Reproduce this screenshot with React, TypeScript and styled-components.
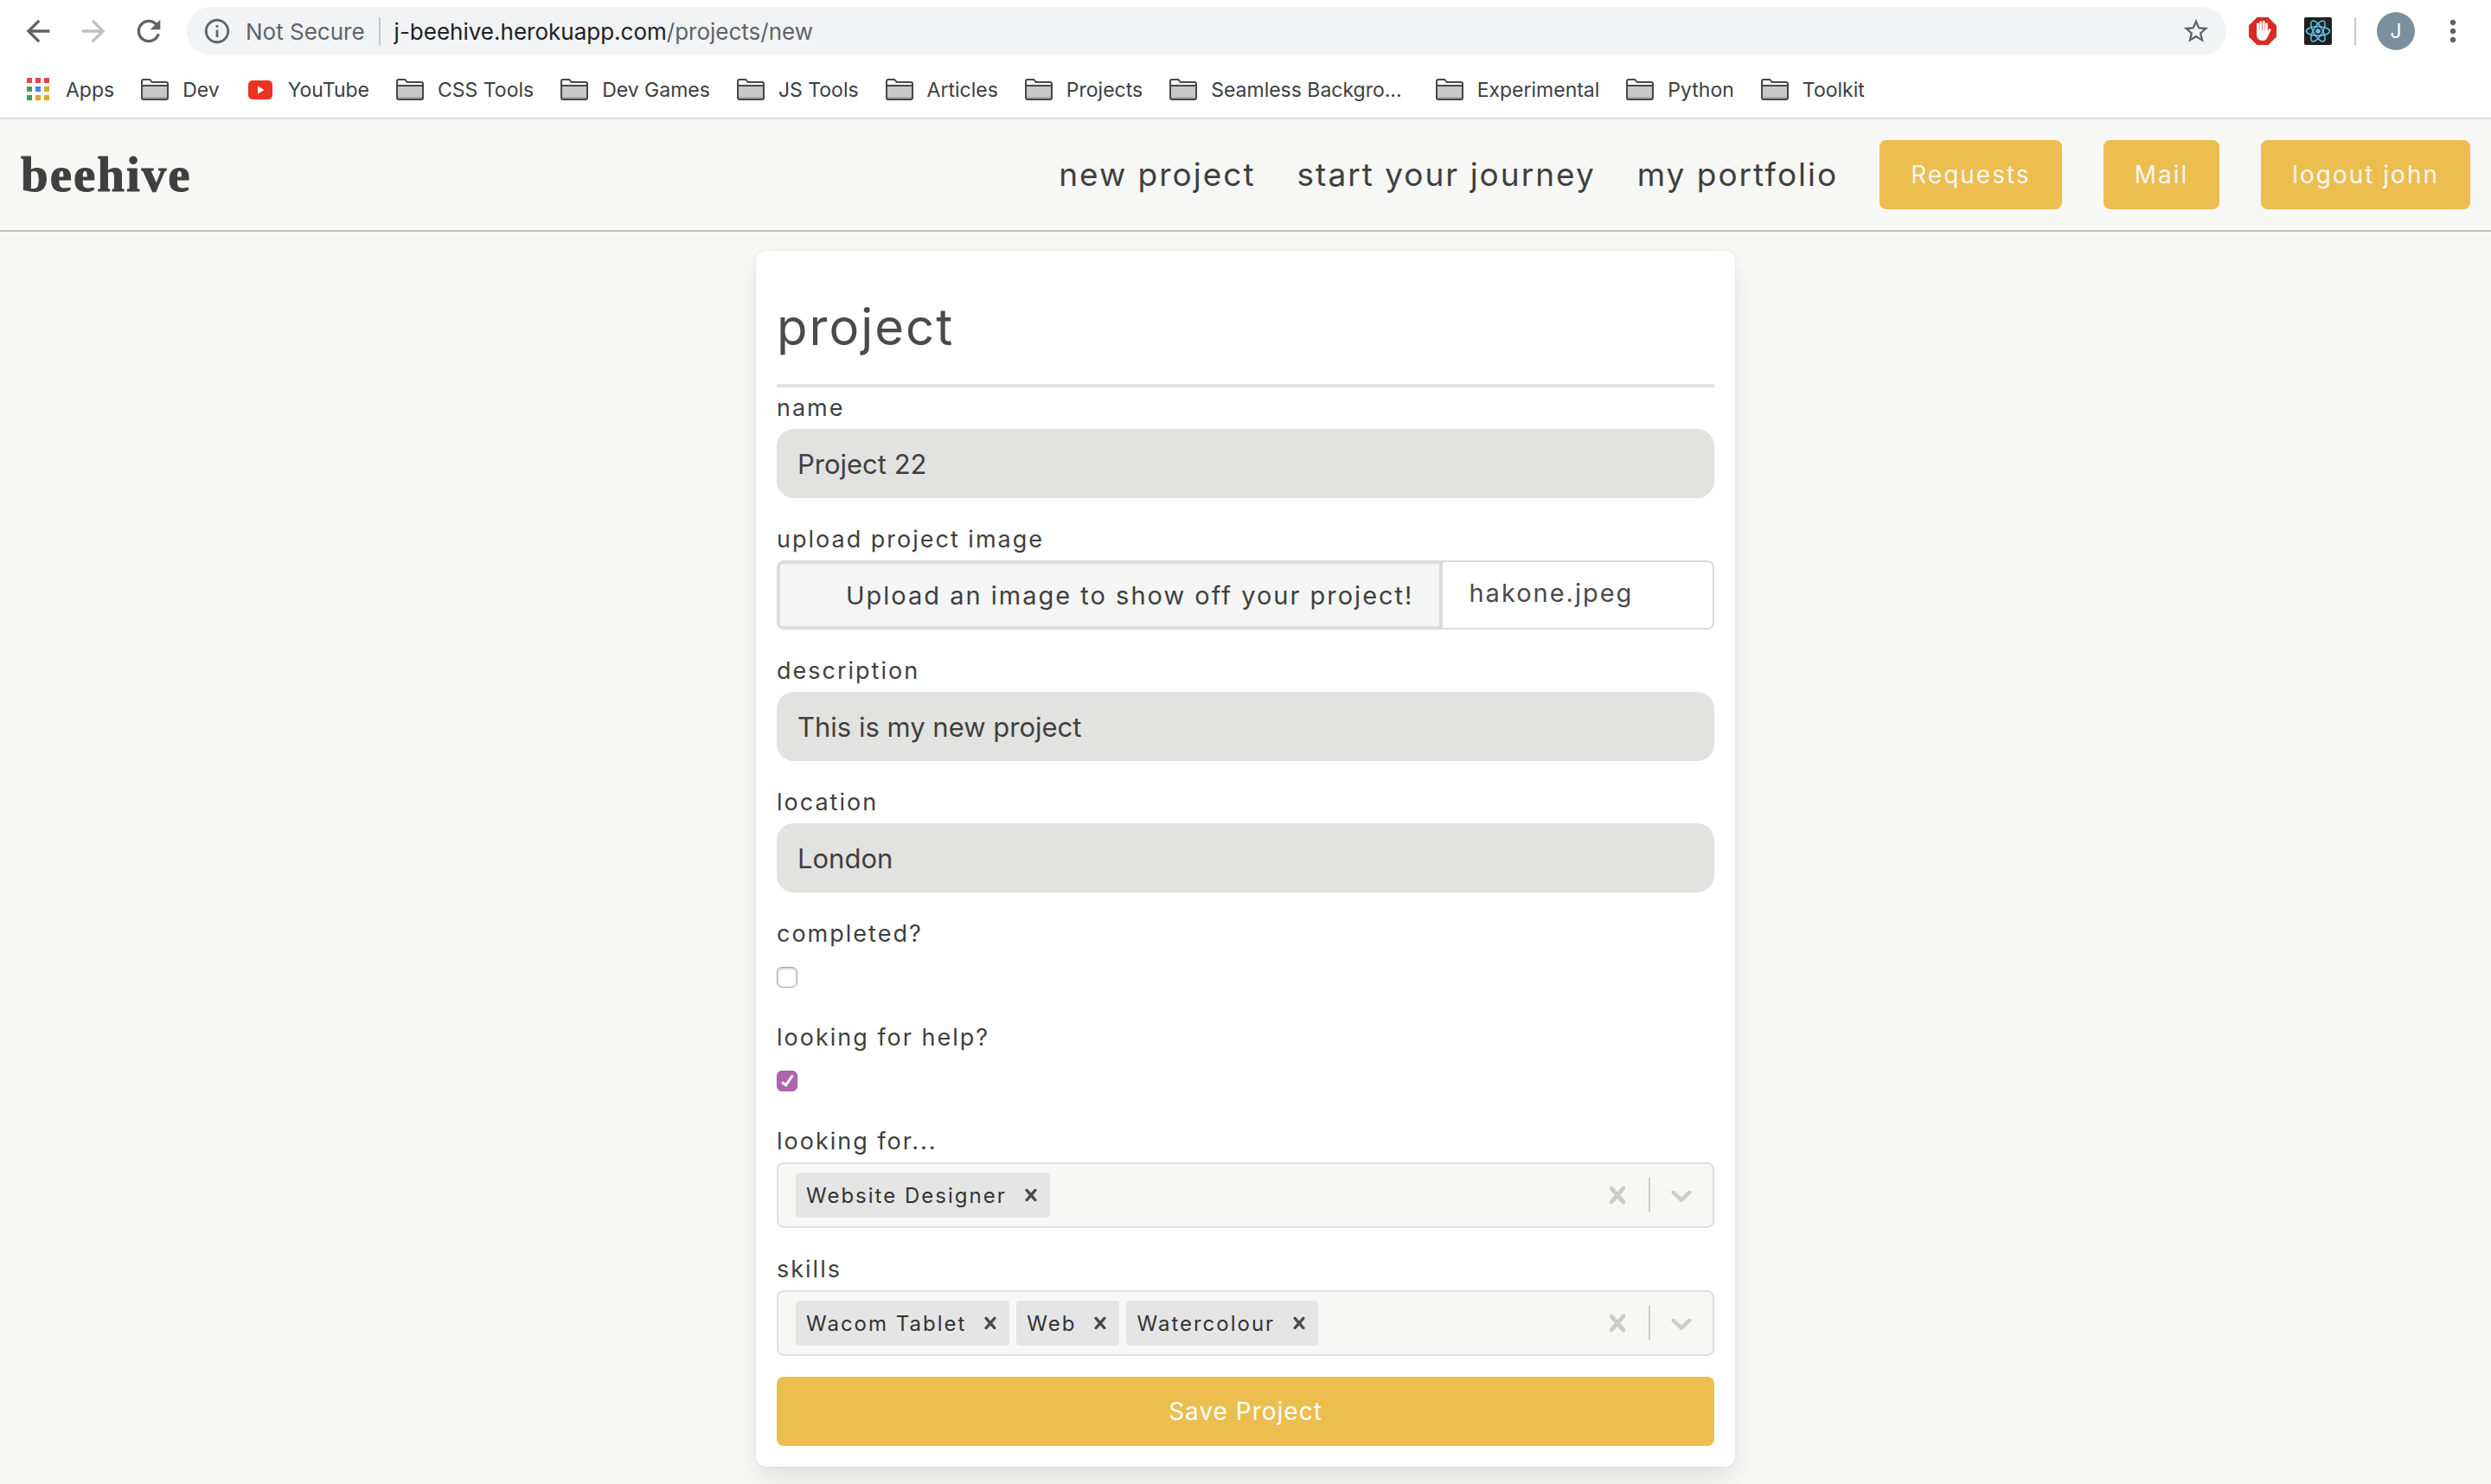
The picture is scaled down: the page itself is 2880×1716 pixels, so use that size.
import React, { useState } from "react";
import styled, { createGlobalStyle } from "styled-components";
import {
  MdArrowBack,
  MdArrowForward,
  MdInfoOutline,
  MdMoreVert,
  MdRefresh,
  MdStarBorder,
} from "react-icons/md";

const color = {
  ink: "#3f3f3f",
  heading: "#4a4a4a",
  paper: "#f7f7f5",
  honey: "#ebbe4f",
  field: "#e2e2e0",
  line: "#dbdbdb",
  chromeIcon: "#5f6368",
};

const GlobalStyle = createGlobalStyle`
  *, *::before, *::after { box-sizing: border-box; }
  html { background: ${color.paper}; }
  body {
    margin: 0;
    background: ${color.paper};
    color: ${color.ink};
    font-family: Inter, "Liberation Sans", sans-serif;
    font-size: 28px;
    letter-spacing: 2px;
    overflow-x: hidden;
  }
  button, input { font-family: inherit; }
`;

/* ---------- browser chrome ---------- */

const Chrome = styled.div`
  background: #fff;
  border-bottom: 2px solid #dadce0;
  letter-spacing: normal;
`;

const Toolbar = styled.div`
  display: flex;
  align-items: center;
  gap: 24px;
  height: 72px;
  padding: 0 24px;
`;

const ToolButton = styled.button<{ $dim?: boolean }>`
  display: flex;
  padding: 0;
  border: 0;
  background: none;
  font-size: 40px;
  color: ${(p) => (p.$dim ? "#bdbfc1" : color.chromeIcon)};
`;

const AddressBar = styled.div`
  flex: 1;
  display: flex;
  align-items: center;
  gap: 16px;
  height: 56px;
  padding: 0 18px;
  border-radius: 28px;
  background: #f1f3f4;
  color: ${color.chromeIcon};
  font-size: 26px;
  white-space: nowrap;

  svg { font-size: 34px; }
`;

const Url = styled.span`
  flex: 1;
  color: ${color.chromeIcon};

  b {
    font-weight: 400;
    color: #202124;
  }
`;

const Rule = styled.span`
  width: 2px;
  height: 32px;
  background: #c6c8ca;
`;

const Extensions = styled.div`
  display: flex;
  gap: 32px;
  padding: 0 2px;
`;

const ExtensionButton = styled.button`
  padding: 0;
  border: 0;
  background: none;

  svg { display: block; }
`;

const Avatar = styled.button`
  width: 44px;
  height: 44px;
  padding: 0;
  border: 0;
  border-radius: 50%;
  background: #7b909c;
  color: #fff;
  font-size: 23px;
`;

const Bookmarks = styled.nav`
  display: flex;
  align-items: center;
  gap: 31px;
  height: 64px;
  padding: 0 28px;
`;

const Bookmark = styled.a<{ $clipped?: boolean }>`
  display: flex;
  align-items: center;
  gap: 16px;
  padding-right: ${(p) => (p.$clipped ? "8px" : "0")};
  color: #3c4043;
  font-size: 23px;
  text-decoration: none;
  white-space: nowrap;
`;

const AppsIcon = () => {
  const cells = ["#e2483d", "#e2483d", "#e2483d", "#4b9a5b", "#4285f4", "#e3a22f", "#4b9a5b", "#e3a22f", "#e3a22f"];
  return (
    <svg width="32" height="32" viewBox="0 0 32 32" aria-hidden="true">
      {cells.map((fill, i) => (
        <rect key={i} x={3 + (i % 3) * 10} y={2 + Math.floor(i / 3) * 10} width="6" height="6" fill={fill} />
      ))}
    </svg>
  );
};

const FolderIcon = () => (
  <svg width="32" height="26" viewBox="0 0 32 26" aria-hidden="true">
    <path d="M1 22V3a2 2 0 0 1 2-2h6.500q1 0 1.700 1l1.500 2H29a2 2 0 0 1 2 2v16a2 2 0 0 1-2 2H3a2 2 0 0 1-2-2z" fill="#fff" />
    <path d="M2 9h28v12H2z" fill="#c8c8c8" />
    <path d="M2 21h28v2.500H2z" fill="#a9a9a9" />
    <path d="M1 22V3a2 2 0 0 1 2-2h6.500q1 0 1.700 1l1.500 2H29a2 2 0 0 1 2 2v16a2 2 0 0 1-2 2H3a2 2 0 0 1-2-2zM1 8h30" fill="none" stroke="#474747" strokeWidth="2" />
  </svg>
);

const YouTubeIcon = () => (
  <svg width="32" height="32" viewBox="0 0 32 32" aria-hidden="true">
    <rect x="2" y="5" width="28" height="22" rx="5" fill="#ea3323" />
    <path d="M13 11.500v9l7.500-4.500z" fill="#fff" />
  </svg>
);

const AdBlockIcon = () => (
  <svg width="32" height="32" viewBox="0 0 32 32" aria-hidden="true">
    <path d="M9.500 0h13L32 9.500v13L22.500 32h-13L0 22.500v-13z" fill="#d52d23" />
    <g fill="none" stroke="#fff" strokeWidth="2.800" strokeLinecap="round">
      <path d="M10.500 8v10M13.800 6v11M17.200 5.500V17M20.500 8v10M24.200 14.500 21 21" />
    </g>
    <path d="M9.100 15h12.800l1.600 2.500-2 5.500q-1.500 4-5.500 4-6.900 0-6.900-7z" fill="#fff" />
  </svg>
);

const ReactIcon = () => (
  <svg width="32" height="32" viewBox="0 0 32 32" aria-hidden="true">
    <rect width="32" height="32" rx="2" fill="#202020" />
    <circle cx="16" cy="16" r="2.800" fill="#61c4ea" />
    <g fill="none" stroke="#61c4ea" strokeWidth="1.500">
      {[0, 60, 120].map((turn) => (
        <ellipse key={turn} cx="16" cy="16" rx="13.500" ry="5.200" transform={`rotate(${turn} 16 16)`} />
      ))}
    </g>
  </svg>
);

const folders = [
  { name: "CSS Tools" },
  { name: "Dev Games" },
  { name: "JS Tools" },
  { name: "Articles" },
  { name: "Projects" },
  { name: "Seamless Backgro...", clipped: true },
  { name: "Experimental" },
  { name: "Python" },
  { name: "Toolkit" },
];

const BrowserChrome = () => (
  <Chrome>
    <Toolbar>
      <ToolButton aria-label="Back"><MdArrowBack /></ToolButton>
      <ToolButton aria-label="Forward" $dim><MdArrowForward /></ToolButton>
      <ToolButton aria-label="Reload"><MdRefresh /></ToolButton>
      <AddressBar>
        <MdInfoOutline />
        <span>Not Secure</span>
        <Rule />
        <Url><b>j-beehive.herokuapp.com</b>/projects/new</Url>
        <MdStarBorder />
      </AddressBar>
      <Extensions>
        <ExtensionButton aria-label="Ad blocker"><AdBlockIcon /></ExtensionButton>
        <ExtensionButton aria-label="React tools"><ReactIcon /></ExtensionButton>
      </Extensions>
      <Rule />
      <Avatar>J</Avatar>
      <ToolButton aria-label="Menu"><MdMoreVert /></ToolButton>
    </Toolbar>
    <Bookmarks>
      <Bookmark href="#"><AppsIcon />Apps</Bookmark>
      <Bookmark href="#"><FolderIcon />Dev</Bookmark>
      <Bookmark href="#"><YouTubeIcon />YouTube</Bookmark>
      {folders.map(({ name, clipped }) => (
        <Bookmark href="#" key={name} $clipped={clipped}><FolderIcon />{name}</Bookmark>
      ))}
    </Bookmarks>
  </Chrome>
);

/* ---------- site header ---------- */

const Header = styled.header`
  display: flex;
  align-items: center;
  justify-content: space-between;
  padding: 24px;
  border-bottom: 2px solid #c3c3c1;
`;

const Logo = styled.a`
  color: ${color.ink};
  font-family: "Liberation Serif", serif;
  font-size: 57px;
  font-weight: 700;
  line-height: 64px;
  text-decoration: none;
  -webkit-text-stroke: 1px ${color.ink};
`;

const Nav = styled.nav`
  display: flex;
  align-items: center;
  gap: 48px;
`;

const NavLink = styled.a`
  color: ${color.ink};
  font-size: 37px;
  line-height: 48px;
  text-decoration: none;
`;

const Button = styled.button<{ $block?: boolean }>`
  display: block;
  width: ${(p) => (p.$block ? "100%" : "auto")};
  height: 80px;
  padding: 0 36px;
  border: 0;
  border-radius: 8px;
  background: ${color.honey};
  color: ${(p) => (p.$block ? "#fff" : color.paper)};
  font-size: 28px;
  letter-spacing: ${(p) => (p.$block ? "1px" : "2px")};
`;

/* ---------- form ---------- */

const Main = styled.main`
  display: flex;
  justify-content: center;
  padding: 22px 24px;
`;

const Card = styled.form`
  width: 100%;
  max-width: 1132px;
  padding: 24px;
  border-radius: 12px;
  background: #fff;
  box-shadow: 0 16px 32px -4px rgba(10, 10, 10, 0.1), 0 0 0 2px rgba(10, 10, 10, 0.02);
`;

const Title = styled.h1`
  margin: 0;
  padding: 24px 0 26px;
  border-bottom: 4px solid #e1e1e1;
  color: ${color.heading};
  font-size: 58px;
  font-weight: 400;
  line-height: 80px;
`;

const Field = styled.div`
  margin-bottom: 24px;
`;

const Label = styled.label`
  display: block;
  font-size: 27px;
  line-height: 48px;
`;

const TextInput = styled.input`
  display: block;
  width: 100%;
  height: 80px;
  padding: 0 24px;
  border: 0;
  border-radius: 20px;
  background: ${color.field};
  color: ${color.ink};
  font-size: 31px;
`;

const FileBox = styled.label`
  display: flex;
  height: 80px;
  font-size: 29px;
`;

const HiddenFile = styled.input`
  position: absolute;
  width: 1px;
  height: 1px;
  opacity: 0;
`;

const FileCta = styled.span`
  display: flex;
  align-items: center;
  padding: 0 30px 0 76px;
  border: 4px solid ${color.line};
  border-radius: 8px 0 0 8px;
  background: #f5f5f5;
`;

const FileName = styled.span`
  flex: 1;
  padding: 0 30px;
  border: 2px solid ${color.line};
  border-left: 0;
  border-radius: 0 8px 8px 0;
  color: ${color.heading};
  line-height: 72px;
`;

const CheckRow = styled.div`
  display: flex;
  align-items: center;
  height: 48px;
  padding-top: 4px;
`;

const Checkbox = styled.input`
  appearance: none;
  display: grid;
  place-items: center;
  width: 24px;
  height: 24px;
  margin: 0;
  border: 1px solid #a8a8a8;
  border-radius: 6px;
  background: #fff;
  box-shadow: inset 0 1px 3px rgba(0, 0, 0, 0.3);

  &:checked {
    border-color: #a55ba2;
    background: #b065ad;
    box-shadow: none;
  }

  &:checked::after {
    content: "";
    width: 7px;
    height: 15px;
    margin-bottom: 3px;
    border: solid #fff;
    border-width: 0 3px 3px 0;
    transform: rotate(35deg);
  }
`;

const SelectBox = styled.div`
  display: flex;
  align-items: center;
  height: 76px;
  padding-left: 20px;
  border: 2px solid #dfdfdf;
  border-radius: 8px;
  background: ${color.paper};
`;

const Values = styled.div`
  flex: 1;
  display: flex;
  gap: 8px;
  min-width: 0;
`;

const Tag = styled.span`
  display: flex;
  align-items: center;
  height: 52px;
  padding-left: 12px;
  border-radius: 4px;
  background: #e5e5e5;
  color: #333;
  font-size: 24px;
  white-space: nowrap;
`;

const TagRemove = styled.button`
  display: flex;
  margin-left: 6px;
  padding: 0 8px;
  border: 0;
  background: none;
  color: ${color.heading};
`;

const SelectInput = styled.input`
  flex: 1;
  width: 0;
  min-width: 0;
  padding: 0;
  border: 0;
  outline: 0;
  background: none;
  font-size: 24px;
`;

const Indicator = styled.button`
  display: flex;
  padding: 16px;
  border: 0;
  background: none;
  color: #ccc;
`;

const Separator = styled.span`
  width: 2px;
  height: 40px;
  background: #ccc;
`;

const Cross = ({ size }: { size: number }) => (
  <svg width={size} height={size} viewBox="0 0 20 20" fill="currentColor" aria-hidden="true">
    <path d="M14.348 14.849c-0.469 0.469-1.229 0.469-1.697 0l-2.651-3.030-2.651 3.029c-0.469 0.469-1.229 0.469-1.697 0-0.469-0.469-0.469-1.229 0-1.697l2.758-3.150-2.759-3.152c-0.469-0.469-0.469-1.228 0-1.697s1.228-0.469 1.697 0l2.652 3.031 2.651-3.031c0.469-0.469 1.228-0.469 1.697 0s0.469 1.229 0 1.697l-2.758 3.152 2.758 3.150c0.469 0.469 0.469 1.229 0 1.698z" />
  </svg>
);

const Chevron = () => (
  <svg width="40" height="40" viewBox="0 0 20 20" fill="currentColor" aria-hidden="true">
    <path d="M4.516 7.548c0.436-0.446 1.043-0.481 1.576 0l3.908 3.747 3.908-3.747c0.533-0.481 1.141-0.446 1.574 0 0.436 0.445 0.408 1.197 0 1.615-0.406 0.418-4.695 4.502-4.695 4.502-0.217 0.223-0.502 0.335-0.787 0.335s-0.570-0.112-0.789-0.335c0 0-4.287-4.084-4.695-4.502s-0.436-1.170 0-1.615z" />
  </svg>
);

function TextField({ id, label, initial }: { id: string; label: string; initial: string }) {
  return (
    <Field>
      <Label htmlFor={id}>{label}</Label>
      <TextInput id={id} type="text" defaultValue={initial} />
    </Field>
  );
}

function CheckField({ id, label, initial }: { id: string; label: string; initial: boolean }) {
  return (
    <Field>
      <Label htmlFor={id}>{label}</Label>
      <CheckRow>
        <Checkbox id={id} type="checkbox" defaultChecked={initial} />
      </CheckRow>
    </Field>
  );
}

function MultiSelect({ id, label, initial }: { id: string; label: string; initial: string[] }) {
  const [values, setValues] = useState(initial);
  return (
    <Field>
      <Label htmlFor={id}>{label}</Label>
      <SelectBox>
        <Values>
          {values.map((value) => (
            <Tag key={value}>
              {value}
              <TagRemove
                type="button"
                aria-label={`Remove ${value}`}
                onClick={() => setValues(values.filter((v) => v !== value))}
              >
                <Cross size={28} />
              </TagRemove>
            </Tag>
          ))}
          <SelectInput id={id} role="combobox" aria-expanded={false} />
        </Values>
        <Indicator type="button" aria-label="Clear all" onClick={() => setValues([])}>
          <Cross size={40} />
        </Indicator>
        <Separator />
        <Indicator type="button" aria-label="Open menu">
          <Chevron />
        </Indicator>
      </SelectBox>
    </Field>
  );
}

export default function App() {
  return (
    <>
      <GlobalStyle />
      <BrowserChrome />
      <Header>
        <Logo href="#">beehive</Logo>
        <Nav>
          <NavLink href="#">new project</NavLink>
          <NavLink href="#">start your journey</NavLink>
          <NavLink href="#">my portfolio</NavLink>
          <Button>Requests</Button>
          <Button>Mail</Button>
          <Button>logout john</Button>
        </Nav>
      </Header>
      <Main>
        <Card onSubmit={(e) => e.preventDefault()}>
          <Title>project</Title>
          <TextField id="name" label="name" initial="Project 22" />
          <Field>
            <Label htmlFor="image">upload project image</Label>
            <FileBox>
              <HiddenFile id="image" type="file" />
              <FileCta>Upload an image to show off your project!</FileCta>
              <FileName>hakone.jpeg</FileName>
            </FileBox>
          </Field>
          <TextField id="description" label="description" initial="This is my new project" />
          <TextField id="location" label="location" initial="London" />
          <CheckField id="completed" label="completed?" initial={false} />
          <CheckField id="help" label="looking for help?" initial />
          <MultiSelect id="roles" label="looking for..." initial={["Website Designer"]} />
          <MultiSelect id="skills" label="skills" initial={["Wacom Tablet", "Web", "Watercolour"]} />
          <Button $block type="submit">Save Project</Button>
        </Card>
      </Main>
    </>
  );
}
